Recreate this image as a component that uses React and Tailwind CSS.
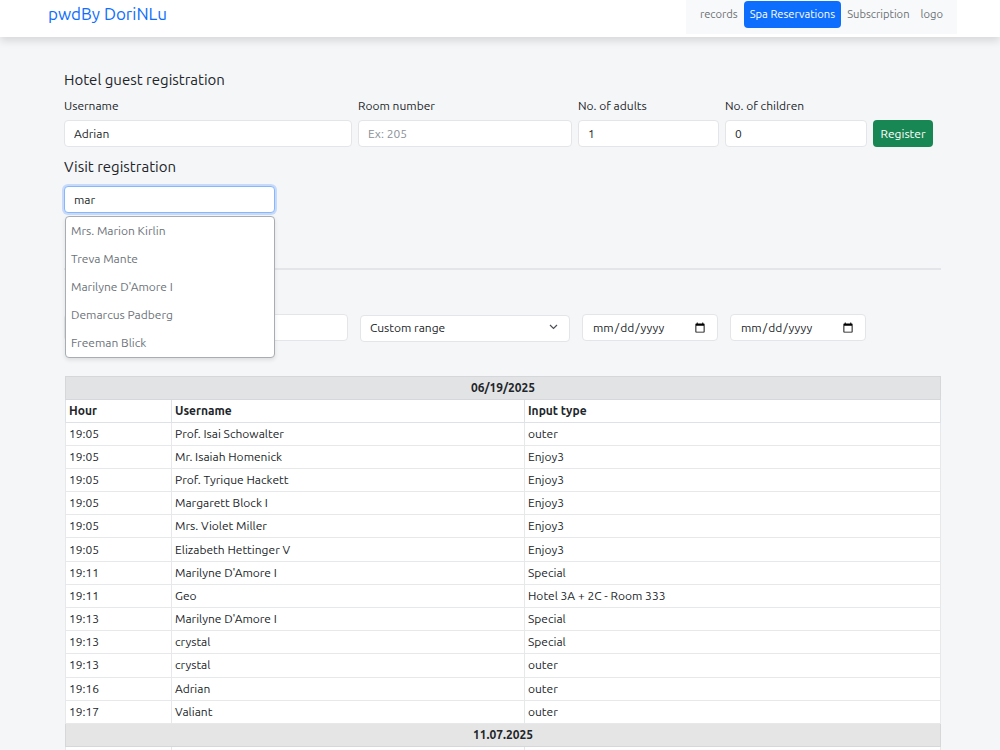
import React from "react";

const rows = [
  ["19:05", "Prof. Isai Schowalter", "outer"],
  ["19:05", "Mr. Isaiah Homenick", "Enjoy3"],
  ["19:05", "Prof. Tyrique Hackett", "Enjoy3"],
  ["19:05", "Margarett Block I", "Enjoy3"],
  ["19:05", "Mrs. Violet Miller", "Enjoy3"],
  ["19:05", "Elizabeth Hettinger V", "Enjoy3"],
  ["19:11", "Marilyne D'Amore I", "Special"],
  ["19:11", "Geo", "Hotel 3A + 2C - Room 333"],
  ["19:13", "Marilyne D'Amore I", "Special"],
  ["19:13", "crystal", "Special"],
  ["19:13", "crystal", "outer"],
  ["19:16", "Adrian", "outer"],
  ["19:17", "Valiant", "outer"],
];

const suggestions = [
  "Mrs. Marion Kirlin",
  "Treva Mante",
  "Marilyne D'Amore I",
  "Demarcus Padberg",
  "Freeman Blick",
];

const inputCls =
  "h-[27px] w-full rounded-[4px] border border-[#e3e5e8] bg-white px-[9px] text-[12px] text-[#212529] placeholder:text-[#8a9097] outline-none";

function Field({ label, width, value, placeholder }) {
  return (
    <div className="flex flex-col" style={{ width }}>
      <label className="mb-[6px] text-[12px] leading-[16px] text-[#212529]">{label}</label>
      <input className={inputCls} defaultValue={value} placeholder={placeholder} />
    </div>
  );
}

export default function App() {
  return (
    <div className="min-h-[750px] bg-[#f5f6f8] font-['Ubuntu','Lato','Noto_Sans',sans-serif] text-[#212529]">
      {/* Navbar */}
      <header className="relative z-10 flex h-[37px] items-start justify-between bg-white pl-12 pr-[43px] shadow-[0_4px_8px_rgba(0,0,0,0.12)]">
        <a className="mt-[3px] text-[17px] leading-[22px] text-[#0d6efd]">pwdBy DoriNLu</a>
        <nav className="flex h-[34px] items-start gap-[6px] bg-[#f8f9fa] px-[14px] pt-[1px] text-[11.2px]">
          <span className="flex h-[27px] items-center text-[#6b7075]">records</span>
          <span className="flex h-[27px] items-center rounded-[4px] bg-[#0d6efd] px-[6px] text-white">Spa Reservations</span>
          <span className="flex h-[27px] items-center text-[#6b7075]">Subscription</span>
          <span className="ml-[5px] flex h-[27px] items-center text-[#6b7075]">logo</span>
        </nav>
      </header>

      <main className="pl-16 pr-[59px] pt-[33px]">
        {/* Hotel guest registration */}
        <h2 className="text-[15px] leading-[20px]">Hotel guest registration</h2>
        <div className="mt-[8px] flex items-end gap-[6px]">
          <Field label="Username" width={288} value="Adrian" />
          <Field label="Room number" width={214} placeholder="Ex: 205" />
          <Field label="No. of adults" width={141} value="1" />
          <Field label="No. of children" width={142} value="0" />
          <button className="h-[27px] w-[60px] rounded-[4px] bg-[#198754] text-[12px] text-white">Register</button>
        </div>

        {/* Visit registration */}
        <h2 className="mt-[10px] text-[15px] leading-[20px]">Visit registration</h2>
        <div className="relative mt-[9px] w-[211px]">
          <input
            className="h-[27px] w-full rounded-[4px] border border-[#86b7fe] bg-white px-[9px] text-[12px] shadow-[0_0_0_2px_rgba(13,110,253,0.2)] outline-none"
            defaultValue="mar"
          />
          <ul className="absolute left-[1px] top-[30px] z-20 w-[210px] rounded-[4px] border border-[#a9adb2] bg-white shadow-[0_2px_4px_rgba(0,0,0,0.1)]">
            {suggestions.map((s) => (
              <li key={s} className="flex h-[28px] items-center px-[5px] text-[12px] text-[#6c737a]">
                {s}
              </li>
            ))}
          </ul>
        </div>

        <hr className="mt-[55px] border-t-2 border-[#e3e5e8]" />

        {/* Visits filters (heading area hidden under the suggestions list) */}
        <div className="mt-[14px] h-[20px]" />
        <div className="mt-[10px] flex gap-[12px]">
          <input className={inputCls + " !w-[284px]"} />
          <div className="relative w-[210px]">
            <select className={inputCls + " appearance-none"} defaultValue="custom">
              <option value="custom">Custom range</option>
            </select>
            <svg className="pointer-events-none absolute right-[12px] top-[10px]" width="9" height="6" viewBox="0 0 9 6">
              <path d="M1 1l3.5 3.5L8 1" fill="none" stroke="#495057" strokeWidth="1.2" />
            </svg>
          </div>
          <input type="date" className={inputCls + " !w-[136px]"} />
          <input type="date" className={inputCls + " !w-[136px]"} />
        </div>

        {/* Table */}
        <table className="mt-[34px] ml-[1px] w-[876px] border-collapse text-[12px]">
          <colgroup>
            <col className="w-[106px]" />
            <col className="w-[353px]" />
            <col />
          </colgroup>
          <tbody>
            <tr className="h-[23px] bg-[#e2e3e5]">
              <td colSpan={3} className="border border-[#d5d7da] text-center font-bold">06/19/2025</td>
            </tr>
            <tr className="h-[23px] bg-white">
              <th className="border border-[#dee2e6] px-[3px] text-left font-bold">Hour</th>
              <th className="border border-[#dee2e6] px-[3px] text-left font-bold">Username</th>
              <th className="border border-[#dee2e6] px-[3px] text-left font-bold">Input type</th>
            </tr>
            {rows.map((r, i) => (
              <tr key={i} className="h-[23.2px] bg-white">
                <td className="border border-[#e6e8ea] px-[3px]">{r[0]}</td>
                <td className="border border-[#e6e8ea] px-[3px]">{r[1]}</td>
                <td className="border border-[#e6e8ea] px-[3px]">{r[2]}</td>
              </tr>
            ))}
            <tr className="h-[23px] bg-[#e5e5e5]">
              <td colSpan={3} className="border border-[#d5d7da] text-center font-bold">11.07.2025</td>
            </tr>
            <tr className="h-[23px] bg-white">
              <td className="border border-[#e6e8ea] px-[3px]">&nbsp;</td>
              <td className="border border-[#e6e8ea] px-[3px]">&nbsp;</td>
              <td className="border border-[#e6e8ea] px-[3px]">&nbsp;</td>
            </tr>
          </tbody>
        </table>
      </main>
    </div>
  );
}
